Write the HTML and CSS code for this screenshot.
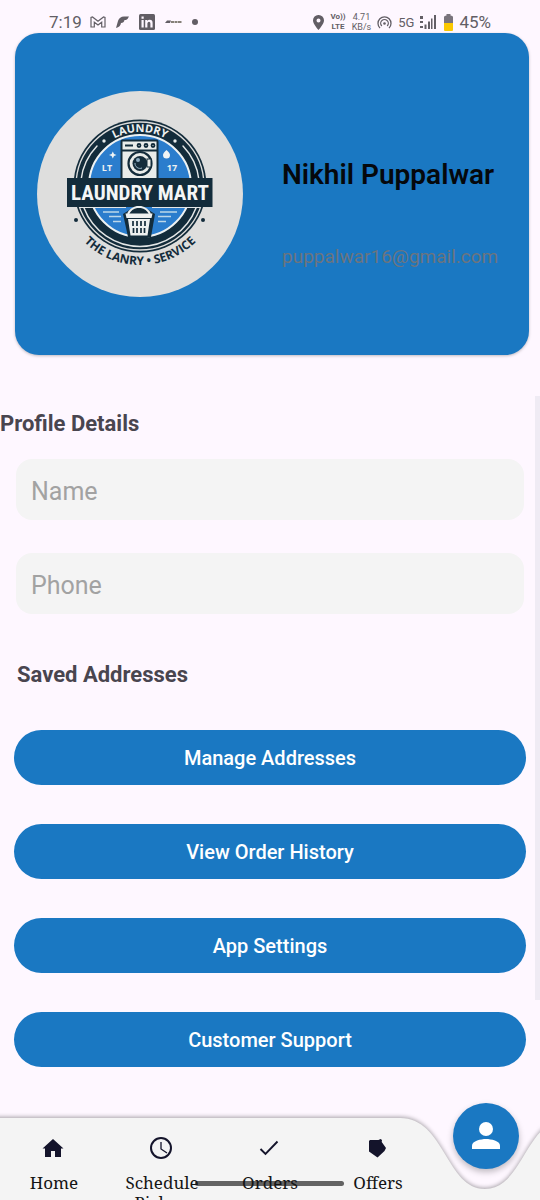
FILE: index.html
```html
<!DOCTYPE html>
<html lang="en">
<head>
<meta charset="utf-8">
<meta name="viewport" content="width=device-width, initial-scale=1">
<title>Profile</title>
<link rel="stylesheet" href="styles.css">
</head>
<body>
<div class="app">
  <header class="status">
    <div class="status-group">
      <span class="clock">7:19</span>
      <svg class="gmail" width="16" height="12" viewBox="0 0 16 12" fill="none" stroke="currentColor" stroke-width="1.2"><path d="M1 11V1.5L2.5 1 8 5.3 13.500 1 15 1.500V11H11.700V6.200L8 9 4.300 6.200V11Z"/></svg>
      <svg width="13" height="12" viewBox="0 0 13 12" fill="currentColor"><path d="M0 12 2 5Q3.500 .5 8 .5H13Q12 3 10 4H8.500Q8 7 5 7Q4.500 11 0 12Z"/></svg>
      <svg width="16" height="16" viewBox="0 0 16 16"><rect width="16" height="16" rx="1.500" fill="currentColor"/><path fill="#fef7ff" d="M2.500 6H4.700V13.500H2.500ZM2.500 2.500H4.700V4.700H2.500ZM6.200 6H8.300V7Q9 5.800 10.800 5.800Q13.600 5.800 13.600 9V13.500H11.400V9.500Q11.400 7.700 10 7.700T8.400 9.500V13.500H6.200Z"/></svg>
      <svg width="17" height="6" viewBox="0 0 17 6"><path fill="currentColor" d="M0 4 2 1.500H6L5 4H0Z"/><path stroke="#858078" stroke-width="2" stroke-dasharray="3 .5" d="M6 3H17"/></svg>
      <svg class="dot" width="6" height="6" viewBox="0 0 6 6"><circle cx="3" cy="3" r="3" fill="currentColor"/></svg>
    </div>
    <div class="status-group status-right">
      <svg width="11" height="15" viewBox="0 0 11 15"><path fill="currentColor" fill-rule="evenodd" d="M5.500 0A5.400 5.400 0 0 1 11 5.500C11 9 5.500 15 5.500 15S0 9 0 5.500A5.400 5.400 0 0 1 5.500 0ZM5.500 3.500A2 2 0 1 0 5.500 7.500 2 2 0 1 0 5.500 3.500Z"/></svg>
      <span class="tiny bold">Vo))<br>LTE</span>
      <span class="tiny">4.71<br>KB/s</span>
      <svg width="15" height="13" viewBox="0 0 15 13" fill="none" stroke="currentColor" stroke-width="1.300"><path d="M3 12A6.500 6.500 0 1 1 12 12M4.800 10A3.800 3.800 0 1 1 10.200 10"/><circle cx="7.500" cy="7.500" r="1.300" fill="currentColor" stroke="none"/></svg>
      <span class="net">5G</span>
      <svg width="16" height="14" viewBox="0 0 16 14" fill="currentColor"><path d="M0 1H3V4H0ZM0 6H3V8H0ZM0 11H3V13H0ZM4.500 9.500H6.500V14H4.500ZM8 6.500H10V14H8ZM11 3.500H12.500V14H11ZM14 0H16V14H14Z"/></svg>
      <svg class="battery" width="9" height="17" viewBox="0 0 9 17"><path fill="#79747c" d="M2.500 0H6.500V1.500Q9 1.500 9 3V10H0V3Q0 1.500 2.500 1.500Z"/><path fill="#fac800" d="M0 9H9V16Q9 17 8 17H1Q0 17 0 16Z"/></svg>
      <span class="pct">45%</span>
    </div>
  </header>

  <section class="card">
    <svg class="avatar" viewBox="37 91 206 206" role="img" aria-label="Laundry Mart logo">
      <defs>
        <path id="arcTop" d="M86 186A54 54 0 0 1 194 186"/>
        <path id="arcBottom" d="M61 186A79 79 0 0 0 219 186"/>
      </defs>
      <circle cx="140" cy="194" r="103" fill="#dededd"/>
      <circle cx="140" cy="186" r="66.500" fill="#132c3b"/>
      <circle cx="140" cy="186" r="64" fill="none" stroke="#dededd" stroke-width="1.300"/>
      <circle cx="140" cy="186" r="51" fill="#2b7dcd" stroke="#eef2f3" stroke-width="2"/>
      <g fill="none" stroke="#e4e7e7" stroke-width="1.500" stroke-linecap="round">
        <path d="M81 180A59 59 0 0 1 97 146M199 180A59 59 0 0 0 183 146"/>
        <path d="M84 208A60 60 0 0 0 196 208"/>
      </g>
      <g fill="#e8ecec"><circle cx="104" cy="141" r="1.700"/><circle cx="175" cy="141" r="1.700"/></g>
      <text class="logo-top"><textPath href="#arcTop" startOffset="50%">LAUNDRY</textPath></text>
      <path fill="#f1f4f4" d="M112.800 151.500 114 154 116.500 155 114 156 112.800 158.500 111.600 156 109 155 111.600 154ZM166.500 150Q170 153 170 155A3.500 3.500 0 0 1 163 155Q163 153 166.500 150Z"/>
      <text class="logo-year" x="107" y="171">LT</text>
      <text class="logo-year" x="172" y="171">17</text>
      <rect x="121.500" y="140.500" width="36" height="44" rx="1" fill="#e9ecea" stroke="#132c3b" stroke-width="2"/>
      <path d="M122 150.500H157M125 145.500H133" stroke="#132c3b" stroke-width="2"/>
      <g fill="none" stroke="#132c3b" stroke-width="1.800"><circle cx="139" cy="145.500" r="1.500"/><circle cx="146" cy="145.500" r="1.500"/><circle cx="153" cy="145.500" r="1.500"/></g>
      <circle cx="140" cy="163.500" r="11.500" fill="#e9ecea" stroke="#132c3b" stroke-width="2.200"/>
      <circle cx="140" cy="163.500" r="7.500" fill="#132c3b"/>
      <path d="M135 163A5 5 0 0 0 142 168" fill="none" stroke="#9bb8ca"/>
      <circle cx="138" cy="160" r="2" fill="#8babc0"/>
      <rect x="147" y="159" width="4" height="8" fill="#e9ecea" stroke="#132c3b"/>
      <path stroke="#bcd7e9" stroke-width="1.300" d="M103 212H119M109 216.500H121M113 221.500H121M160 212H177M158 216.500H171M158 221.500H166"/>
      <rect x="67" y="178" width="145.500" height="29" fill="#132c3b"/>
      <path d="M80 207.500H126M152 207.500H200" stroke="#e4e7e7"/>
      <text class="logo-name" x="140" y="200">LAUNDRY MART</text>
      <path d="M123 214 139 204 155 214 151 237Q139 241 128 237Z" fill="#132c3b"/>
      <path d="M128 214Q131 208 137 207H141Q147 208 150 214" fill="none" stroke="#eef1f1" stroke-width="2"/>
      <path d="M125.500 213.500H152.500L151.500 218H126.500ZM128 219H150L147.500 235.500H130.500Z" fill="#eef1f1"/>
      <path d="M133 221V226M137 221V226M141 221V226M145 221V226M133.500 228V233M137 228V233M141 228V233M144.500 228V233" stroke="#132c3b" stroke-width="1.700"/>
      <g fill="#132c3b"><circle cx="76" cy="220" r="2"/><circle cx="203" cy="220" r="2"/></g>
      <text class="logo-bottom"><textPath href="#arcBottom" startOffset="50%">THE LANRY • SERVICE</textPath></text>
    </svg>
    <div class="who">
      <h1 class="name">Nikhil Puppalwar</h1>
      <p class="email">puppalwar16@gmail.com</p>
    </div>
  </section>

  <main class="content">
    <div class="scrollbar"></div>
    <h2 class="heading heading-flush">Profile Details</h2>
    <form class="fields">
      <input class="field" type="text" placeholder="Name" aria-label="Name">
      <input class="field" type="tel" placeholder="Phone" aria-label="Phone">
    </form>
    <h2 class="heading">Saved Addresses</h2>
    <div class="actions">
      <button class="action" type="button">Manage Addresses</button>
      <button class="action" type="button">View Order History</button>
      <button class="action" type="button">App Settings</button>
      <button class="action" type="button">Customer Support</button>
    </div>
  </main>

  <nav class="nav" aria-label="Main">
    <svg class="nav-bg" viewBox="0 0 540 82" preserveAspectRatio="none"><path fill="#f4f4f4" d="M-20 0H400C445 0 446 71 485 71S525 0 570 0V100H-20Z"/></svg>
    <div class="gesture"></div>
    <a class="tab" href="#home"><svg class="tab-icon" viewBox="0 0 24 24" fill="currentColor"><path d="M4 21V12.500H1.500L12 3 22.500 12.500H20V21H14V15H10V21Z"/></svg><span>Home</span></a>
    <a class="tab" href="#schedule"><svg class="tab-icon" viewBox="0 0 24 24" fill="none" stroke="currentColor"><circle cx="12" cy="12" r="10" stroke-width="2"/><path d="M12 6V13L18 17" stroke-width="1.300"/></svg><span>Schedule Pickup</span></a>
    <a class="tab" href="#orders"><svg class="tab-icon" viewBox="0 0 24 24" fill="none" stroke="currentColor" stroke-width="1.900"><path d="M3.500 13 8.500 18 20.500 5.500"/></svg><span>Orders</span></a>
    <a class="tab" href="#offers"><svg class="tab-icon" viewBox="0 0 24 24" fill="currentColor"><path d="M4 5 5 4H13.500L15.500 3 17 4 16.700 6 21 12 19.500 15 12.500 21.500 4 15.500Z"/></svg><span>Offers</span></a>
    <a class="fab" href="#profile" aria-label="Profile"><svg width="28" height="28" viewBox="0 0 28 28" fill="#fff"><circle cx="14" cy="7" r="7"/><path d="M0 27V23.500C0 19 9 17 14 17S28 19 28 23.500V27Z"/></svg></a>
  </nav>
</div>
</body>
</html>
```
FILE: styles.css
```css
* { box-sizing: border-box; }
body {
  margin: 0;
  background: #fef7ff;
  font-family: Roboto, "Liberation Sans", sans-serif;
}
h1, h2, p { margin: 0; }

.app {
  display: flex;
  flex-direction: column;
  min-height: 100vh;
}

.status {
  display: flex;
  justify-content: space-between;
  height: 33px;
  padding: 11px 49px 0;
  color: #625e65;
}
.status-group {
  display: flex;
  align-items: center;
  height: 22px;
  gap: 10px;
}
.status-right { gap: 6px; }
.status svg { flex: none; }
.clock { font-size: 17px; margin-right: -2px; }
.pct { font-size: 17px; }
.net { font-size: 13px; }
.tiny { font-size: 9px; line-height: 10px; text-align: center; }
.bold { font-size: 8px; font-weight: 700; }
.battery { margin-left: 2px; }

.card {
  display: flex;
  align-items: center;
  gap: 39px;
  margin: 0 11px 0 15px;
  padding: 58px 22px;
  border-radius: 24px;
  background: #1a78c2;
  box-shadow: 0 1px 3px rgba(0, 0, 0, .25);
}
.avatar { width: 206px; height: 206px; flex: none; }
.who {
  display: grid;
  gap: 54px;
  padding-top: 40px;
}
.name {
  font-size: 28px;
  line-height: 32px;
  font-weight: 600;
  color: #05080c;
  white-space: nowrap;
}
.email {
  font-size: 19px;
  line-height: 24px;
  color: #6c747e;
}

.logo-top, .logo-year, .logo-name, .logo-bottom { text-anchor: middle; font-weight: 700; }
.logo-top { font-family: "Open Sans", sans-serif; font-size: 11px; fill: #eef1f1; }
.logo-year { font-family: "Open Sans", sans-serif; font-size: 9px; fill: #eef1f1; }
.logo-name { font-family: "Liberation Sans Narrow", "Roboto Condensed", Roboto, sans-serif; font-size: 21px; fill: #f4f6f6; }
.logo-bottom { font-family: "Open Sans", sans-serif; font-size: 12px; fill: #132c3b; }

.content {
  position: relative;
  margin-top: 41px;
  padding: 14px 14px 50px;
}
.scrollbar {
  position: absolute;
  top: 0;
  right: 0;
  width: 5px;
  height: 604px;
  background: #efebf4;
}
.heading {
  margin-left: 3px;
  font-size: 22px;
  line-height: 28px;
  font-weight: 700;
  color: #49454f;
}
.heading-flush { margin-left: -14px; }
.fields {
  display: grid;
  gap: 33px;
  margin: 21px 2px 47px;
}
.field {
  width: 100%;
  height: 61px;
  padding: 3px 15px 0;
  border: 0;
  border-radius: 16px;
  background: #f4f4f4;
  font: 25px Roboto, "Liberation Sans", sans-serif;
  color: #222;
}
.field::placeholder { color: #a2a2a2; opacity: 1; }
.actions {
  display: grid;
  gap: 39px;
  margin-top: 41px;
}
.action {
  height: 55px;
  padding: 0 24px;
  border: 0;
  border-radius: 28px;
  background: #1a78c2;
  color: #fff;
  font: 500 20px Roboto, "Liberation Sans", sans-serif;
}

.nav {
  position: sticky;
  bottom: 0;
  display: grid;
  grid-template-columns: repeat(5, 1fr);
  height: 82px;
  margin-top: auto;
}
.nav-bg {
  position: absolute;
  inset: 0;
  width: 100%;
  height: 100%;
  overflow: visible;
  filter: drop-shadow(0 -1px 2px rgba(0, 0, 0, .35));
  clip-path: inset(-20px 0 0 0);
}
.gesture {
  position: absolute;
  bottom: 14px;
  left: 50%;
  width: 149px;
  height: 5px;
  margin-left: -75px;
  border-radius: 3px;
  background: #636363;
}
.tab {
  position: relative;
  display: flex;
  flex-direction: column;
  align-items: center;
  gap: 13px;
  height: 82px;
  padding: 18px 12px 0;
  overflow: hidden;
  color: #14142b;
  text-decoration: none;
  text-align: center;
  font: 17px/20px "Noto Serif", "Liberation Serif", serif;
}
.tab span { color: #151515; }
.tab-icon { width: 24px; height: 24px; flex: none; margin-right: 3px; }
.fab {
  position: relative;
  display: grid;
  place-items: center;
  justify-self: center;
  width: 66px;
  height: 66px;
  margin-top: -15px;
  border-radius: 50%;
  background: #1a78c2;
  box-shadow: 0 3px 6px rgba(0, 0, 0, .25);
}
```
